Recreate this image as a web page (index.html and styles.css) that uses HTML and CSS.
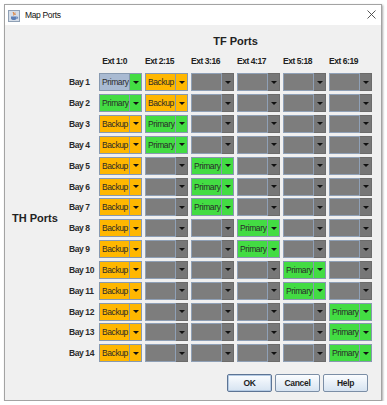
FILE: index.html
```html
<!DOCTYPE html>
<html lang="en">
<head>
  <meta charset="UTF-8">
  <meta name="viewport" content="width=device-width, initial-scale=1.0">
  <title>Map Ports</title>
  <link rel="stylesheet" href="styles.css">
</head>
<body>

  <div class="ventana">
    <div class="titulo-barra">
      <svg class="icono-app" width="12" height="12" viewBox="0 0 12 12">
        <rect x="0.5" y="0.5" width="11" height="11" fill="#d5dde8" stroke="#8fa0b5"/>
        <path d="M5.5 2 C4.5 3.2 6.8 3.8 5.6 5.4 M7 2.6 C6.3 3.5 7.6 4 6.9 5" stroke="#e0701a" stroke-width="1" fill="none"/>
        <path d="M3 6.5 H8.5 V8.2 C8.5 9.4 7.6 10 5.8 10 C4 10 3 9.4 3 8.2 Z" fill="#5d7fb6"/>
        <path d="M8.5 7 H9.6 V8.4 H8.4" stroke="#5d7fb6" stroke-width="0.8" fill="none"/>
      </svg>
      <span class="titulo">Map Ports</span>
      <svg class="cerrar" width="9" height="9" viewBox="0 0 9 9">
        <path d="M0.5 0.5 L8.5 8.5 M8.5 0.5 L0.5 8.5" stroke="#444" stroke-width="0.9"/>
      </svg>
    </div>

    <div class="contenido">
      <div class="superior">
        <div class="th-lado">TH Ports</div>
        <div class="tabla" id="tabla">
          <div class="tf-titulo">TF Ports</div>
          <div class="encabezados">
            <div class="hueco"></div>
            <div class="enc">Ext 1:0</div>
            <div class="enc">Ext 2:15</div>
            <div class="enc">Ext 3:16</div>
            <div class="enc">Ext 4:17</div>
            <div class="enc">Ext 5:18</div>
            <div class="enc">Ext 6:19</div>
          </div>
        </div>
      </div>

      <div class="botones">
        <button class="boton foco">OK</button>
        <button class="boton">Cancel</button>
        <button class="boton">Help</button>
      </div>
    </div>
  </div>

  <script>
    // columna del Primary y del Backup para cada bay
    const bays = [
      { p: 0, b: 1, sel: true },
      { p: 0, b: 1 },
      { p: 1, b: 0 },
      { p: 1, b: 0 },
      { p: 2, b: 0 },
      { p: 2, b: 0 },
      { p: 2, b: 0 },
      { p: 3, b: 0 },
      { p: 3, b: 0 },
      { p: 4, b: 0 },
      { p: 4, b: 0 },
      { p: 5, b: 0 },
      { p: 5, b: 0 },
      { p: 5, b: 0 }
    ];

    const tabla = document.getElementById("tabla");

    bays.forEach((bay, i) => {
      const fila = document.createElement("div");
      fila.className = "fila";

      const etiqueta = document.createElement("div");
      etiqueta.className = "bay";
      etiqueta.textContent = `Bay ${i + 1}`;
      fila.appendChild(etiqueta);

      for (let c = 0; c < 6; c++) {
        const combo = document.createElement("div");
        let texto = "";
        combo.className = "combo vacio";
        if (c === bay.p) {
          combo.className = "combo primary";
          texto = "Primary";
        } else if (c === bay.b) {
          combo.className = "combo backup";
          texto = "Backup";
        }
        if (c === bay.p && bay.sel) combo.classList.add("sel");

        const valor = document.createElement("div");
        valor.className = "valor";
        valor.textContent = texto;
        const flecha = document.createElement("div");
        flecha.className = "flecha";

        combo.appendChild(valor);
        combo.appendChild(flecha);
        fila.appendChild(combo);
      }

      tabla.appendChild(fila);
    });
  </script>
</body>
</html>
```

FILE: styles.css
```css
* {
  box-sizing: border-box;
}

body {
  margin: 0;
  padding: 0;
  background: #ffffff;
  font-family: "Liberation Sans", Arial, sans-serif;
  color: #222;
}

.ventana {
  margin: 4px 0 0 4px;
  width: 378px;
  height: 397px;
  border: 1px solid #a3a3a3;
  box-shadow: 1px 1px 2px rgba(0, 0, 0, 0.35);
  display: flex;
  flex-direction: column;
}

.titulo-barra {
  height: 20px;
  background: #ffffff;
  display: flex;
  align-items: center;
  padding-left: 3px;
  padding-right: 5px;
}

.icono-app {
  margin-top: 1px;
}

.titulo {
  font-size: 8.5px;
  letter-spacing: -0.35px;
  margin-left: 5px;
  color: #111;
}

.cerrar {
  margin-left: auto;
  margin-top: -2px;
}

.contenido {
  flex: 1;
  background: #f0f0f0;
  display: flex;
  flex-direction: column;
}

.superior {
  display: flex;
  padding-top: 8px;
}

.th-lado {
  width: 64px;
  padding-left: 7px;
  padding-top: 40px;
  display: flex;
  align-items: center;
  font-size: 11px;
  font-weight: bold;
  color: #222;
}

.tabla {
  display: flex;
  flex-direction: column;
  gap: 2.85px;
}

.tf-titulo {
  height: 16px;
  line-height: 16px;
  padding-left: 30px;
  text-align: center;
  font-size: 11px;
  font-weight: bold;
}

.encabezados {
  height: 18.6px;
  display: flex;
  align-items: center;
  gap: 3px;
}

.hueco {
  width: 27px;
}

.enc {
  width: 43px;
  text-align: right;
  padding-right: 15px;
  font-size: 8.5px;
  font-weight: bold;
  letter-spacing: -0.45px;
  white-space: nowrap;
}

.fila {
  height: 18px;
  display: flex;
  align-items: center;
  gap: 3px;
}

.bay {
  width: 27px;
  font-size: 8.5px;
  font-weight: bold;
  letter-spacing: -0.4px;
  color: #2a2a2a;
  white-space: nowrap;
}

.combo {
  width: 43px;
  height: 18px;
  display: flex;
}

.valor {
  width: 31px;
  height: 18px;
  border: 1px solid #8799b0;
  padding-left: 2px;
  font-size: 8.5px;
  line-height: 16px;
  letter-spacing: -0.4px;
  color: #2a2a2a;
  white-space: nowrap;
  overflow: hidden;
}

.flecha {
  flex: 1;
  height: 18px;
  border: 1px solid #8799b0;
  border-left: none;
  display: flex;
  align-items: center;
  justify-content: center;
}

.flecha::after {
  content: "";
  border-left: 3px solid transparent;
  border-right: 3px solid transparent;
  border-top: 3px solid #111;
}

.combo.primary .valor,
.combo.primary .flecha {
  background: #43dc43;
}

.combo.backup .valor,
.combo.backup .flecha {
  background: #ffb700;
}

.combo.vacio .valor {
  background: #7d7d7d;
  border-color: #8fa0b6;
}

.combo.vacio .flecha {
  background: #777777;
  border-color: #6c6c6c;
}

.combo.sel .valor {
  background: #a9bad2;
}

.botones {
  display: flex;
  justify-content: flex-end;
  gap: 3px;
  margin-top: 12px;
  padding-right: 13px;
}

.boton {
  width: 45px;
  height: 18px;
  padding: 0;
  border: 1px solid #7b8ea6;
  border-radius: 2px;
  background: linear-gradient(#fbfdff, #d6e3f1);
  font-family: "Liberation Sans", Arial, sans-serif;
  font-size: 8.5px;
  font-weight: bold;
  letter-spacing: -0.3px;
  color: #1e1e1e;
  cursor: pointer;
}

.boton.foco {
  border-color: #5d7494;
  box-shadow: inset 0 0 0 1px #b5cbe4;
}
```
